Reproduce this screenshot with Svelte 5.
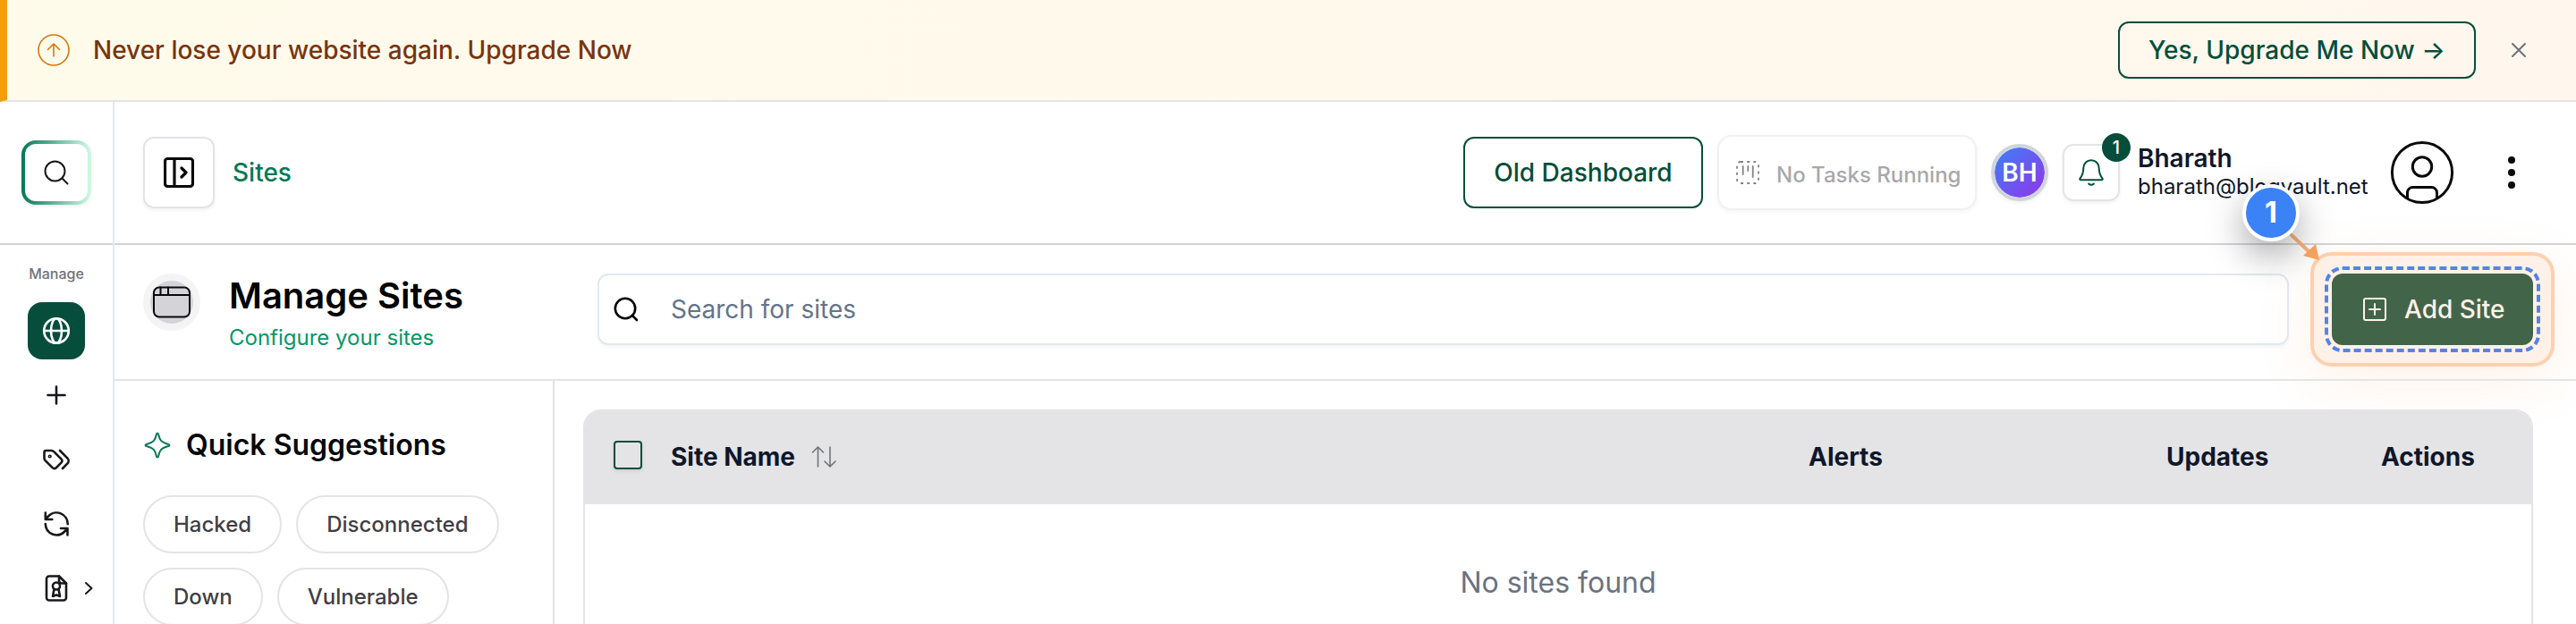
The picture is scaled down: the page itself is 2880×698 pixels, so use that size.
<script lang="ts">
	let search = '';

	const filters = ['Hacked', 'Disconnected', 'Down', 'Vulnerable'];
</script>

<div class="page">
	<div class="banner">
		<svg class="banner-icon" viewBox="0 0 36 36" width="36" height="36">
			<circle cx="18" cy="18" r="17" />
			<path d="M18 25V11M11.500 17.500L18 11l6.500 6.500" />
		</svg>
		<span class="banner-text">Never lose your website again. Upgrade Now</span>
		<button class="banner-button">Yes, Upgrade Me Now →</button>
		<button class="banner-close" aria-label="close">
			<svg viewBox="0 0 16 16" width="16" height="16"><path d="M1 1l14 14M15 1L1 15" /></svg>
		</button>
	</div>

	<div class="body">
		<nav class="sidebar">
			<div class="sidebar-top">
				<button class="sidebar-search" aria-label="search">
					<svg viewBox="0 0 28 28" width="28" height="28"><circle cx="12.500" cy="12.500" r="11" /><path d="M20.500 20.500l6 6" /></svg>
				</button>
			</div>
			<span class="sidebar-label">Manage</span>
			<a href="#sites" class="sidebar-link active" aria-label="sites">
				<svg viewBox="0 0 32 32" width="32" height="32">
					<circle cx="16" cy="16" r="13.800" />
					<ellipse cx="16" cy="16" rx="6" ry="13.800" />
					<path d="M2.200 16h27.600" />
				</svg>
			</a>
			<a href="#add" class="sidebar-link" aria-label="add">
				<svg viewBox="0 0 32 32" width="32" height="32"><path d="M16 6.500v19M6.500 16h19" /></svg>
			</a>
			<a href="#tags" class="sidebar-link" aria-label="tags">
				<svg viewBox="0 0 32 32" width="32" height="32">
					<path d="M2.500 8v6.500c0 1 .4 2 1.100 2.700l8 8a3 3 0 0 0 4.200 0l5.600-5.600a3 3 0 0 0 0-4.200l-8.200-8.200A4 4 0 0 0 10.400 6H4.500a2 2 0 0 0-2 2z" />
					<path d="M20 6l8.500 8.700a4 4 0 0 1 0 5.600L23 26" />
					<circle cx="8.700" cy="12.500" r=".8" />
				</svg>
			</a>
			<a href="#sync" class="sidebar-link" aria-label="sync">
				<svg viewBox="0 0 32 32" width="32" height="32">
					<path d="M28.700 16.300A12.500 12.500 0 0 0 7 7.500L4 10.500M3.800 3.500v7.500h7.500M3.800 16a12.500 12.500 0 0 0 21.500 8.500l3-3M28.500 28.500V21H21" />
				</svg>
			</a>
			<a href="#reports" class="sidebar-link" aria-label="reports">
				<svg viewBox="0 0 32 32" width="32" height="32">
					<path d="M19 2.500H8a3 3 0 0 0-3 3v21a3 3 0 0 0 3 3h16a3 3 0 0 0 3-3V10.500z" />
					<path d="M19 2.500v5a3 3 0 0 0 3 3h5" />
					<circle cx="16" cy="13.500" r="4" />
					<path d="M13.500 17l-1.500 8 4-1.500 4 1.500-1.500-8" />
				</svg>
				<svg class="chevron" viewBox="0 0 10 16" width="10" height="16"><path d="M2 2l6.500 6L2 14" /></svg>
			</a>
		</nav>

		<main class="main">
			<header class="header">
				<button class="toggle" aria-label="toggle menu">
					<svg viewBox="0 0 34 34" width="34" height="34">
						<rect x="1.500" y="1.500" width="31" height="31" rx="3" />
						<path d="M12 1.500v31M20 12l5 5-5 5" />
					</svg>
				</button>
				<a href="#sites" class="crumb">Sites</a>
				<div class="header-right">
					<button class="dashboard">Old Dashboard</button>
					<button class="tasks" disabled>
						<svg viewBox="0 0 28 28" width="28" height="28">
							<rect class="dashed" x="2" y="2" width="24" height="24" rx="4" />
							<path d="M8.700 7v9M14.300 7v5M19.700 7v12" />
						</svg>
						<span>No Tasks Running</span>
					</button>
					<div class="avatar">BH</div>
					<button class="bell" aria-label="notifications">
						<svg viewBox="0 0 28 30" width="28" height="30">
							<path d="M1.500 21.500c2.500-3 3.800-6 3.800-11.500C5.300 5 9 1.200 14 1.200S22.700 5 22.700 10c0 5.500 1.300 8.500 3.800 11.500.6.900.1 1.800-1 1.800H2.500c-1.100 0-1.600-.9-1-1.800zM11.200 27.500c1.400 1.600 4.200 1.600 5.600 0" />
						</svg>
						<span class="bell-count">1</span>
					</button>
					<div class="user">
						<span class="user-name">Bharath</span>
						<span class="user-email">bharath@blogvault.net</span>
					</div>
					<svg class="user-icon" viewBox="0 0 72 72" width="72" height="72">
						<circle cx="36" cy="36" r="33.600" />
						<circle cx="36" cy="29.500" r="10.700" />
						<path d="M19.500 64v-5.500a6 6 0 0 1 6-6h21a6 6 0 0 1 6 6V64" />
					</svg>
					<svg class="dots" viewBox="0 0 8 36" width="8" height="36">
						<circle cx="4" cy="4" r="4" />
						<circle cx="4" cy="18" r="4" />
						<circle cx="4" cy="32" r="4" />
					</svg>
				</div>
			</header>

			<section class="title-bar">
				<div class="title-icon">
					<svg viewBox="0 0 42 36" width="42" height="36">
						<rect x="1" y="1.500" width="40" height="33" rx="6" />
						<path d="M1 10h40M8.500 1.500V10M17 1.500V10" />
					</svg>
				</div>
				<div class="title">
					<h1>Manage Sites</h1>
					<p>Configure your sites</p>
				</div>
				<label class="search">
					<svg viewBox="0 0 28 28" width="28" height="28"><circle cx="13" cy="13" r="11.200" /><path d="M21 21l5 5" /></svg>
					<input type="text" placeholder="Search for sites" bind:value={search} />
				</label>
				<div class="add-wrap">
					<button class="add">
						<svg viewBox="0 0 28 28" width="28" height="28">
							<rect x="2" y="2" width="24" height="24" rx="2" />
							<path d="M14 8v12M8 14h12" />
						</svg>
						<span>Add Site</span>
					</button>
					<div class="spotlight"></div>
					<svg class="marker-arrow" viewBox="0 0 40 40" width="40" height="40">
						<path class="marker-line" d="M6 9l19 18" />
						<path class="marker-head" d="M37 37L33 19 19 32z" />
					</svg>
					<div class="marker">1</div>
				</div>
			</section>

			<div class="content">
				<aside class="suggestions">
					<h2>
						<svg viewBox="0 0 30 30" width="30" height="30">
							<path d="M15 1.500c.9 0 1 .7 1.300 2 1.300 6 3 8.400 10.200 10.200 1.300.3 2 .5 2 1.300s-.7 1-2 1.300c-7.200 1.800-8.900 4.200-10.200 10.200-.3 1.300-.4 2-1.300 2s-1-.7-1.300-2c-1.300-6-3-8.400-10.200-10.200-1.300-.3-2-.5-2-1.300s.7-1 2-1.300c7.200-1.800 8.900-4.200 10.200-10.200.3-1.300.4-2 1.300-2z" />
						</svg>
						Quick Suggestions
					</h2>
					<div class="chips">
						{#each filters as filter}
							<button class="chip">{filter}</button>
						{/each}
					</div>
				</aside>
				<div class="table">
					<div class="table-head">
						<input type="checkbox" class="checkbox" aria-label="select all" />
						<span class="col-name">
							Site Name
							<svg viewBox="0 0 28 26" width="28" height="26">
								<path d="M7.500 24V2M1.500 8l6-6 6 6M21 2v22M15 18l6 6 6-6" />
							</svg>
						</span>
						<span class="col-alerts">Alerts</span>
						<span class="col-updates">Updates</span>
						<span class="col-actions">Actions</span>
					</div>
					<div class="table-empty">No sites found</div>
				</div>
			</div>
		</main>
	</div>
</div>

<style>
	:global(body) {
		margin: 0;
		background-color: #ffffff;
		overflow: hidden;
	}

	.page {
		display: flex;
		flex-direction: column;
		height: 698px;
		overflow: hidden;
		font-family: Inter, "Liberation Sans", sans-serif;
		font-size: 28px;
		color: #09090b;
	}

	.page :global(*) {
		box-sizing: border-box;
	}

	button {
		font-family: inherit;
		font-size: inherit;
		padding: 0;
		background-color: #ffffff;
		border: none;
	}

	a {
		color: inherit;
		text-decoration: none;
	}

	svg {
		flex-shrink: 0;
		fill: none;
		stroke: currentColor;
		stroke-width: 2;
		stroke-linecap: round;
		stroke-linejoin: round;
	}

	.banner {
		display: flex;
		align-items: center;
		flex-shrink: 0;
		height: 114px;
		padding: 0 48px 0 34px;
		border-left: 8px solid #f59e0b;
		border-bottom: 2px solid #e4e4e7;
		background: linear-gradient(90deg, #fffbeb, #fff7ed);
	}

	.banner-icon {
		color: #d97706;
		stroke-width: 1.6;
	}

	.banner-text {
		flex: 1;
		margin-left: 26px;
		font-weight: 500;
		color: #78350f;
	}

	.banner-button {
		width: 400px;
		height: 64px;
		border: 2px solid #064e3b;
		border-radius: 12px;
		background-color: transparent;
		font-weight: 500;
		color: #064e3b;
	}

	.banner-close {
		display: flex;
		justify-content: center;
		align-items: center;
		width: 64px;
		height: 64px;
		margin-left: 16px;
		margin-right: -16px;
		background-color: transparent;
		color: #71717a;
	}

	.body {
		display: flex;
		flex: 1;
		min-height: 0;
	}

	.sidebar {
		display: flex;
		flex-direction: column;
		align-items: center;
		flex-shrink: 0;
		width: 128px;
		border-right: 2px solid #e2e8f0;
	}

	.sidebar-top {
		display: flex;
		justify-content: center;
		align-items: center;
		flex-shrink: 0;
		width: 126px;
		height: 160px;
		border-bottom: 2px solid #d4d4d8;
	}

	.sidebar-search {
		display: flex;
		justify-content: center;
		align-items: center;
		width: 78px;
		height: 72px;
		border: 4px solid transparent;
		border-radius: 16px;
		background: linear-gradient(#ffffff, #ffffff) padding-box, linear-gradient(90deg, #047857, #d1fae5) border-box;
		box-shadow: 0 2px 4px rgba(0, 0, 0, .06);
		color: #18181b;
	}

	.sidebar-label {
		margin: 22px 0 21px;
		font-size: 16px;
		line-height: 21px;
		font-weight: 500;
		color: #71717a;
	}

	.sidebar-link {
		position: relative;
		display: flex;
		justify-content: center;
		align-items: center;
		flex-shrink: 0;
		width: 64px;
		height: 64px;
		margin-bottom: 8px;
		border-radius: 16px;
		color: #18181b;
	}

	.sidebar-link svg {
		stroke-width: 2.6;
	}

	.sidebar-link.active {
		background-color: #064e3b;
		color: #ffffff;
	}

	.sidebar-link .chevron {
		position: absolute;
		right: -9px;
		stroke-width: 2;
	}

	.main {
		display: flex;
		flex: 1;
		flex-direction: column;
		min-width: 0;
	}

	.header {
		display: flex;
		align-items: center;
		flex-shrink: 0;
		height: 160px;
		padding: 0 68px 0 32px;
		border-bottom: 2px solid #d4d4d8;
	}

	.toggle {
		display: flex;
		justify-content: center;
		align-items: center;
		width: 80px;
		height: 80px;
		border: 2px solid #e4e4e7;
		border-radius: 12px;
		box-shadow: 0 2px 4px rgba(0, 0, 0, .06);
		color: #09090b;
	}

	.toggle svg {
		stroke-width: 3.2;
	}

	.crumb {
		margin-left: 20px;
		font-weight: 500;
		color: #047857;
	}

	.header-right {
		display: flex;
		align-items: center;
		margin-left: auto;
	}

	.dashboard {
		width: 268px;
		height: 80px;
		border: 2px solid #064e3b;
		border-radius: 12px;
		font-weight: 500;
		color: #064e3b;
	}

	.tasks {
		display: flex;
		align-items: center;
		width: 290px;
		height: 84px;
		margin: 0 16px;
		padding-left: 18px;
		border: 2px solid #e4e4e7;
		border-radius: 16px;
		box-shadow: 0 2px 4px rgba(0, 0, 0, .08);
		font-size: 24px;
		font-weight: 500;
		color: #52525b;
		opacity: .5;
	}

	.tasks svg {
		stroke: #09090b;
		stroke-width: 1.8;
	}

	.tasks .dashed {
		stroke-dasharray: 3 4.150;
		stroke-linecap: butt;
	}

	.tasks span {
		margin: 5px 0 0 18px;
	}

	.avatar {
		display: flex;
		justify-content: center;
		align-items: center;
		width: 64px;
		height: 64px;
		border: 4px solid #d1d5db;
		border-radius: 50%;
		background: linear-gradient(135deg, #3b82f6, #9333ea) padding-box;
		box-shadow: 0 2px 4px rgba(0, 0, 0, .06);
		font-weight: 600;
		color: #ffffff;
	}

	.bell {
		position: relative;
		display: flex;
		justify-content: center;
		align-items: center;
		width: 64px;
		height: 64px;
		margin-left: 16px;
		border: 2px solid #e4e4e7;
		border-radius: 12px;
		box-shadow: 0 2px 4px rgba(0, 0, 0, .06);
		color: #064e3b;
	}

	.bell-count {
		position: absolute;
		top: -14px;
		right: -14px;
		width: 32px;
		height: 32px;
		border-radius: 50%;
		background-color: #064e3b;
		font-size: 20px;
		line-height: 32px;
		font-weight: 500;
		color: #ffffff;
	}

	.user {
		display: flex;
		flex-direction: column;
		width: 280px;
		margin-left: 20px;
		color: #0f172a;
	}

	.user-name {
		font-weight: 600;
		line-height: 32px;
	}

	.user-email {
		font-size: 24px;
		line-height: 32px;
	}

	.user-icon {
		margin-left: 2px;
		stroke-width: 3;
	}

	.dots {
		margin-left: 60px;
		fill: #09090b;
		stroke: none;
	}

	.title-bar {
		display: flex;
		flex-shrink: 0;
		height: 152px;
		padding: 32px 48px 0 32px;
		border-bottom: 2px solid #e4e4e7;
	}

	.title-icon {
		display: flex;
		justify-content: center;
		align-items: center;
		width: 64px;
		height: 64px;
		border: 8px solid #f4f4f5;
		border-radius: 50%;
		background-color: #d4d4d8;
	}

	.title-icon svg {
		margin: 0 -10px;
	}

	.title {
		width: 412px;
		margin-left: 32px;
	}

	h1 {
		margin: 1px 0 0;
		font-size: 40px;
		line-height: 48px;
		font-weight: 600;
		color: #000000;
	}

	.title p {
		margin: 9px 0 0;
		font-size: 24px;
		line-height: 28px;
		color: #059669;
	}

	.search {
		display: flex;
		align-items: center;
		width: 1891px;
		height: 80px;
		padding-left: 16px;
		border: 2px solid #e2e8f0;
		border-radius: 12px;
		box-shadow: 0 2px 4px rgba(0, 0, 0, .05);
	}

	.search svg {
		stroke: #000000;
		stroke-width: 2.6;
	}

	.search input {
		flex: 1;
		margin-left: 36px;
		padding: 0;
		border: none;
		outline: none;
		background-color: transparent;
		font-family: inherit;
		font-size: 28px;
	}

	.search input::placeholder {
		color: #64748b;
	}

	.add-wrap {
		position: relative;
		width: 225px;
		height: 80px;
		margin-left: 48px;
	}

	.add {
		display: flex;
		align-items: center;
		width: 225px;
		height: 80px;
		padding-left: 34px;
		border-radius: 12px;
		outline: 4px dashed #5484e8;
		outline-offset: 4px;
		background-color: #42654a;
		font-weight: 500;
		color: #fff1e8;
	}

	.add span {
		margin-left: 19px;
	}

	/* guide overlay around the add button */
	.spotlight {
		position: absolute;
		z-index: -1;
		top: -24px;
		left: -24px;
		width: 273px;
		height: 128px;
		border: 4px solid #fed0ae;
		border-radius: 24px;
		background-color: #fff1e8;
		box-shadow: 0 16px 64px rgba(249, 115, 22, .1);
	}

	.marker {
		position: absolute;
		top: -100px;
		left: -100px;
		width: 64px;
		height: 64px;
		border: 4px solid #ffffff;
		border-radius: 50%;
		background-color: #3b82f6;
		box-shadow: 0 16px 40px rgba(0, 0, 0, .35);
		font-size: 32px;
		line-height: 56px;
		font-weight: 700;
		text-align: center;
		color: #ffffff;
	}

	.marker-arrow {
		position: absolute;
		top: -52px;
		left: -51px;
	}

	.marker-line {
		stroke: #fbb27c;
		stroke-width: 4;
	}

	.marker-head {
		fill: #fba661;
		stroke: none;
	}

	.content {
		display: flex;
		flex: 1;
		min-height: 0;
	}

	.suggestions {
		flex-shrink: 0;
		width: 492px;
		padding: 48px 32px 0;
		border-right: 2px solid #e4e4e7;
	}

	h2 {
		display: flex;
		align-items: center;
		gap: 17px;
		margin: 0 0 32px 1px;
		font-size: 32px;
		line-height: 48px;
		font-weight: 600;
	}

	h2 svg {
		stroke: #047857;
	}

	.chips {
		display: flex;
		flex-wrap: wrap;
		gap: 16px;
	}

	.chip {
		height: 65px;
		padding: 0 32px;
		border: 2px solid #e4e4e7;
		border-radius: 33px;
		font-size: 24px;
		font-weight: 500;
		color: #3f3f46;
	}

	.table {
		flex: 1;
		height: 400px;
		margin: 32px 48px 0 32px;
		border: 2px solid #e4e4e7;
		border-radius: 20px;
		overflow: hidden;
	}

	.table-head {
		display: grid;
		grid-template-columns: 64px 1272px 400px 240px 1fr;
		align-items: center;
		height: 104px;
		padding: 0 0 3px 32px;
		background-color: #e4e4e7;
		font-weight: 700;
		color: #0f172a;
	}

	.checkbox {
		appearance: none;
		width: 32px;
		height: 32px;
		margin: -3px 0 0;
		border: 2px solid #064e3b;
		border-radius: 4px;
		box-shadow: 0 2px 4px rgba(0, 0, 0, .1);
	}

	.col-name {
		display: flex;
		align-items: center;
		gap: 18px;
	}

	.col-name svg {
		stroke: #71717a;
		stroke-width: 1.6;
	}

	.table-empty {
		padding-top: 68px;
		font-size: 32px;
		line-height: 40px;
		text-align: center;
		color: #6b7280;
	}
</style>
